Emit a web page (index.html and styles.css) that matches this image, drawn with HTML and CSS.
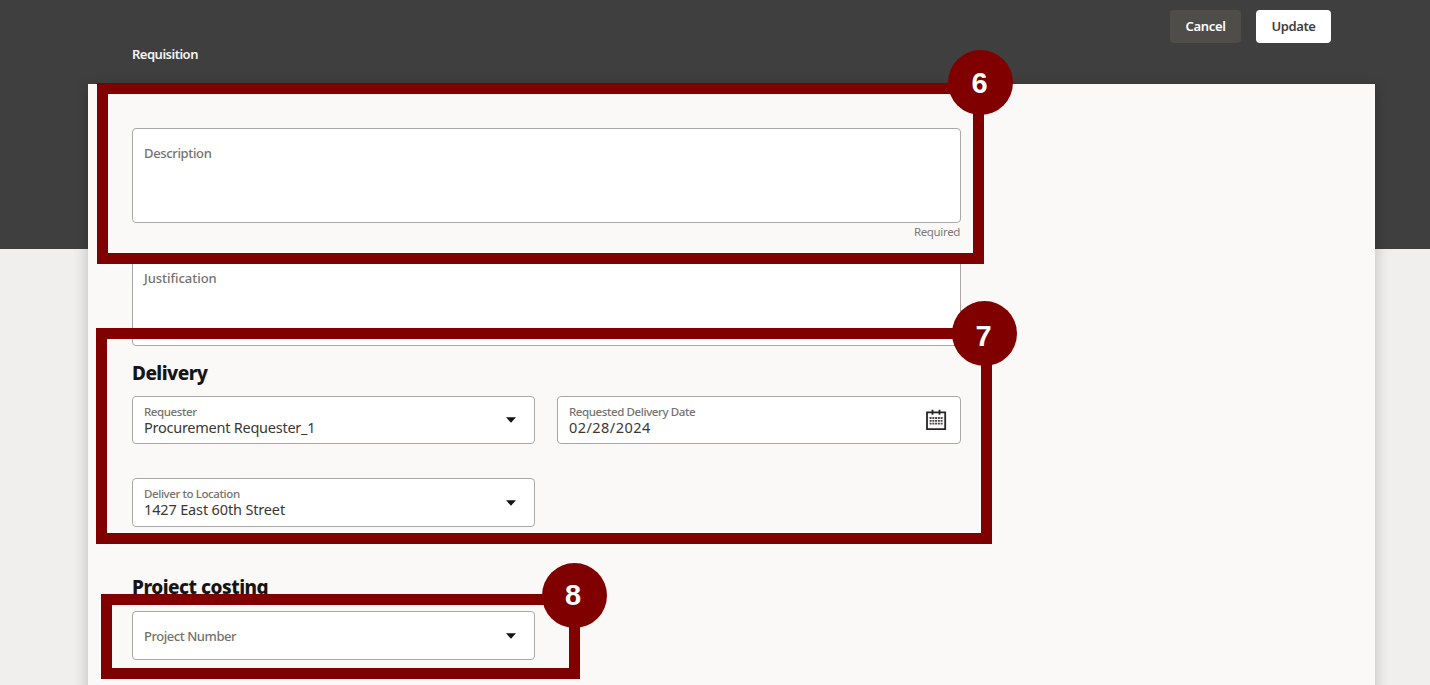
FILE: index.html
```html
<!DOCTYPE html>
<html lang="en">
<head>
    <meta charset="UTF-8">
    <meta name="viewport" content="width=device-width, initial-scale=1.0">
    <title>Requisition</title>
    <link rel="stylesheet" href="styles.css">
</head>
<body>
    <div class="page">
        <header class="header">
            <h1>Requisition</h1>
            <div class="actions">
                <button class="btn btn-cancel">Cancel</button>
                <button class="btn btn-update">Update</button>
            </div>
        </header>

        <main class="sheet">
            <div class="form">
                <div class="field textarea">
                    <span class="placeholder">Description</span>
                </div>
                <div class="hint">Required</div>
                <div class="field textarea textarea-short">
                    <span class="placeholder placeholder-wide">Justification</span>
                </div>

                <h2 class="delivery-title">Delivery</h2>
                <div class="grid">
                    <div class="field">
                        <div class="text">
                            <span class="label">Requester</span>
                            <span class="value">Procurement Requester_1</span>
                        </div>
                        <svg class="arrow" width="12" height="6" viewBox="0 0 12 6"><path d="M1 0.3h10L6 5.8z" fill="#161513"/></svg>
                    </div>
                    <div class="field">
                        <div class="text">
                            <span class="label">Requested Delivery Date</span>
                            <span class="value value-date">02/28/2024</span>
                        </div>
                        <svg class="calendar" width="22" height="22" viewBox="0 0 22 22">
                            <path d="M2 3.3h18.2v16.9H2z" fill="none" stroke="#252422" stroke-width="1.8"/>
                            <path d="M7.5 0.8v5M14.5 0.8v5" stroke="#252422" stroke-width="1.8"/>
                            <path d="M4.6 9h13M4.6 11.8h13M4.6 14.6h13" stroke="#4a4845" stroke-width="1.8" stroke-dasharray="2 0.75"/>
                        </svg>
                    </div>
                    <div class="field field-tall">
                        <div class="text">
                            <span class="label">Deliver to Location</span>
                            <span class="value value-location">1427 East 60th Street</span>
                        </div>
                        <svg class="arrow" width="12" height="6" viewBox="0 0 12 6"><path d="M1 0.3h10L6 5.8z" fill="#161513"/></svg>
                    </div>
                </div>

                <h2 class="project-title">Project costing</h2>
                <div class="grid">
                    <div class="field field-tall">
                        <span class="placeholder placeholder-narrow">Project Number</span>
                        <svg class="arrow" width="12" height="6" viewBox="0 0 12 6"><path d="M1 0.3h10L6 5.8z" fill="#161513"/></svg>
                    </div>
                </div>
            </div>
        </main>

        <!-- numbered step callouts over the form -->
        <div class="callout step-6"><span class="badge">6</span></div>
        <div class="callout step-7"><span class="badge">7</span></div>
        <div class="callout step-8"><span class="badge">8</span></div>
    </div>
</body>
</html>
```
FILE: styles.css
```css
* {
    box-sizing: border-box;
}

body {
    margin: 0;
    font-family: "Noto Sans", "Open Sans", sans-serif;
    color: #161513;
}

.page {
    position: relative;
    height: 685px;
    overflow: hidden;
    background: linear-gradient(#403f3f 249px, #f0efee 249px);
}

.header {
    height: 84px;
    padding: 10px 99px 0 132px;
    display: flex;
    justify-content: space-between;
    align-items: flex-start;
}

.header h1 {
    margin: 34px 0 0;
    font-size: 13px;
    line-height: 20px;
    font-weight: 600;
    letter-spacing: -0.5px;
    color: #f5f4f2;
}

.actions {
    display: flex;
    gap: 15px;
}

.btn {
    height: 33px;
    padding: 0 0 2px;
    border: none;
    border-radius: 4px;
    font-family: inherit;
    font-size: 13px;
    font-weight: 600;
    letter-spacing: -0.3px;
}

.btn-cancel {
    width: 71px;
    background: #4e4d4a;
    color: #fff;
}

.btn-update {
    width: 75px;
    background: #fff;
    color: #403f3d;
    letter-spacing: -0.45px;
}

.sheet {
    width: 1287px;
    height: 640px;
    margin-left: 88px;
    padding: 44px 44px 0;
    background: #fbf9f8;
    box-shadow: 0 3px 14px rgba(0, 0, 0, 0.22);
}

.form {
    width: 829px;
}

.field {
    display: flex;
    align-items: center;
    justify-content: space-between;
    height: 48px;
    padding: 0 12px 0 11px;
    background: #fff;
    border: 1px solid #aaa8a6;
    border-radius: 4px;
}

.field-tall {
    height: 49px;
}

.textarea {
    height: 95px;
    align-items: flex-start;
    padding-top: 14px;
}

.textarea-short {
    height: 93px;
}

.placeholder {
    font-size: 13px;
    line-height: 20px;
    font-weight: 500;
    letter-spacing: -0.35px;
    color: #75726f;
}

.placeholder-wide {
    letter-spacing: -0.05px;
}

.placeholder-narrow {
    letter-spacing: -0.45px;
}

.hint {
    height: 30px;
    padding-right: 1px;
    font-size: 11.5px;
    line-height: 18px;
    letter-spacing: -0.35px;
    text-align: right;
    color: #7c7976;
}

h2 {
    margin: 0;
    font-size: 19px;
    line-height: 26px;
    font-weight: 800;
}

.delivery-title {
    margin: 14px 0 10px;
    letter-spacing: -0.55px;
}

.project-title {
    margin: 47px 0 11px;
    letter-spacing: -0.5px;
}

.grid {
    display: grid;
    grid-template-columns: 403px 404px;
    gap: 34px 22px;
}

.text {
    display: flex;
    flex-direction: column;
    padding-bottom: 2px;
}

.label {
    font-size: 11.5px;
    line-height: 15px;
    font-weight: 500;
    letter-spacing: -0.4px;
    color: #75726f;
}

.value {
    font-size: 14.5px;
    line-height: 16px;
    letter-spacing: -0.25px;
    color: #3a3835;
}

.value-date {
    letter-spacing: 0.45px;
}

.value-location {
    letter-spacing: -0.15px;
}

.arrow {
    margin-right: 5px;
}

.calendar {
    margin-right: 1px;
}

/* step callouts */
.callout {
    position: absolute;
    border: 11px solid #800000;
}

.badge {
    position: absolute;
    width: 65px;
    height: 65px;
    border-radius: 50%;
    background: #800000;
    color: #fff;
    font: bold 29px/65px "Liberation Sans", Arial, sans-serif;
    text-align: center;
}

.step-6 {
    left: 97px;
    top: 83px;
    width: 887px;
    height: 181px;
}

.step-6 .badge {
    left: 840px;
    top: -44px;
    line-height: 67px;
    padding-right: 2px;
}

.step-7 {
    left: 96px;
    top: 328px;
    width: 896px;
    height: 216px;
}

.step-7 .badge {
    left: 845px;
    top: -38px;
    line-height: 70px;
    padding-right: 2px;
}

.step-8 {
    left: 101px;
    top: 594px;
    width: 479px;
    height: 85px;
}

.step-8 .badge {
    left: 430px;
    top: -42px;
    line-height: 64px;
    padding-right: 3px;
}
```
